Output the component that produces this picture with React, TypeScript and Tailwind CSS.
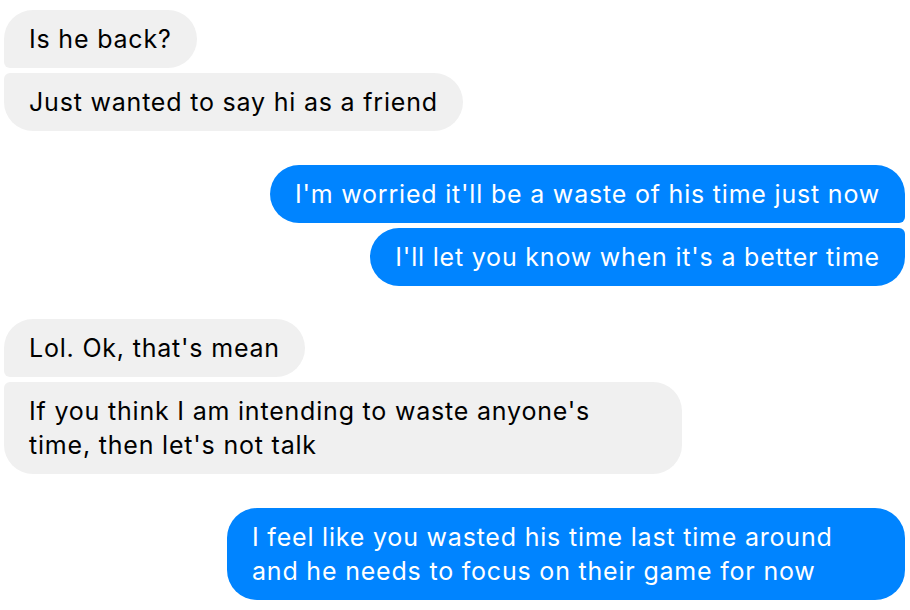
const GROUPS: { mine: boolean; messages: string[] }[] = [
  { mine: false, messages: ["Is he back?", "Just wanted to say hi as a friend"] },
  {
    mine: true,
    messages: [
      "I'm worried it'll be a waste of his time just now",
      "I'll let you know when it's a better time",
    ],
  },
  {
    mine: false,
    messages: [
      "Lol. Ok, that's mean",
      "If you think I am intending to waste anyone's time, then let's not talk",
    ],
  },
  {
    mine: true,
    messages: [
      "I feel like you wasted his time last time around and he needs to focus on their game for now",
    ],
  },
];

function bubbleCorners(mine: boolean, i: number, count: number) {
  const first = i === 0;
  const last = i === count - 1;
  if (count === 1) return "rounded-[30px]";
  if (mine) {
    if (first) return "rounded-[29px] rounded-br-[6px]";
    if (last) return "rounded-[29px] rounded-tr-[6px]";
    return "rounded-[29px] rounded-r-[6px]";
  }
  if (first) return "rounded-[29px] rounded-bl-[6px]";
  if (last) return "rounded-[29px] rounded-tl-[6px]";
  return "rounded-[29px] rounded-l-[6px]";
}

export default function App() {
  return (
    <div
      className="w-[910px] h-[610px] bg-white overflow-hidden pl-[4px] pr-[5px] pt-[10px] flex flex-col gap-[33.5px]"
      style={{ fontFamily: "Inter, 'Noto Sans', sans-serif" }}
    >
      {GROUPS.map((g, gi) => (
        <div
          key={gi}
          className={`flex flex-col gap-[5px] ${g.mine ? "items-end" : "items-start"}`}
        >
          {g.messages.map((m, i) => (
            <div
              key={i}
              className={`max-w-[678px] px-[25px] py-[12px] text-[25px] leading-[34px] tracking-[0.8px] ${
                g.mine ? "bg-[#0084ff] text-white" : "bg-[#f0f0f0] text-black"
              } ${bubbleCorners(g.mine, i, g.messages.length)}`}
            >
              {m}
            </div>
          ))}
        </div>
      ))}
    </div>
  );
}
